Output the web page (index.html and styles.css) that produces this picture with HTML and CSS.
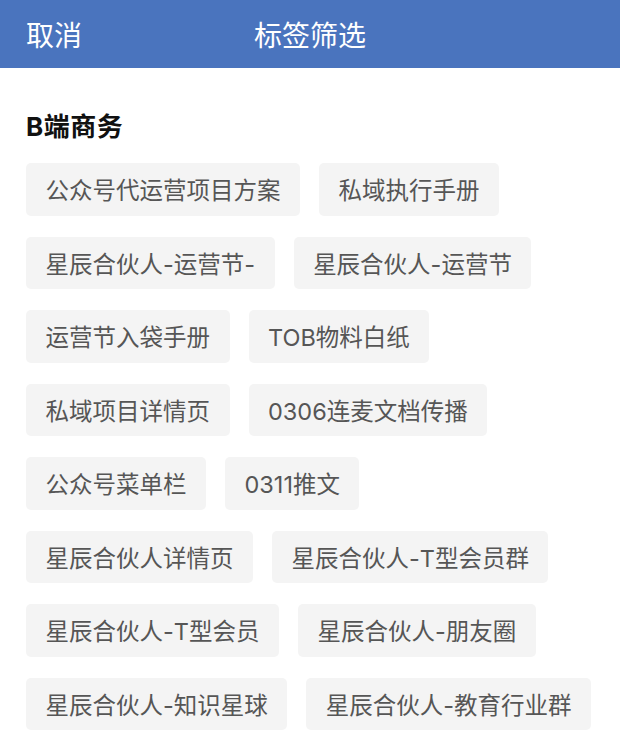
FILE: index.html
```html
<!DOCTYPE html>
<html lang="zh-CN">
<head>
<meta charset="utf-8">
<title>标签筛选</title>
<link rel="stylesheet" href="styles.css">
</head>
<body>
<header class="topbar">
  <span class="cancel">取消</span>
  <span class="title">标签筛选</span>
</header>
<main class="content">
  <h2 class="group-title">B端商务</h2>
  <div class="tags">
    <span class="tag">公众号代运营项目方案</span>
    <span class="tag">私域执行手册</span>
    <span class="tag">星辰合伙人-运营节-</span>
    <span class="tag">星辰合伙人-运营节</span>
    <span class="tag">运营节入袋手册</span>
    <span class="tag">TOB物料白纸</span>
    <span class="tag">私域项目详情页</span>
    <span class="tag">0306连麦文档传播</span>
    <span class="tag">公众号菜单栏</span>
    <span class="tag">0311推文</span>
    <span class="tag">星辰合伙人详情页</span>
    <span class="tag">星辰合伙人-T型会员群</span>
    <span class="tag">星辰合伙人-T型会员</span>
    <span class="tag">星辰合伙人-朋友圈</span>
    <span class="tag">星辰合伙人-知识星球</span>
    <span class="tag">星辰合伙人-教育行业群</span>
  </div>
</main>
</body>
</html>
```

FILE: styles.css
```css
html, body {
  margin: 0;
  padding: 0;
  background: #ffffff;
}
body {
  font-family: "Noto Sans CJK SC", "Noto Sans", sans-serif;
  overflow: hidden;
}
.topbar {
  height: 68px;
  background: #4a74be;
  color: #ffffff;
  display: flex;
  align-items: center;
  padding: 0 26px;
  font-size: 28px;
  box-sizing: border-box;
}
.cancel {
  width: 56px;
}
.title {
  margin-left: 172px;
}
.content {
  padding: 0 26px;
}
.group-title {
  margin: 44px 0 21px;
  font-family: "Inter", "Noto Sans CJK SC", sans-serif;
  font-size: 26px;
  line-height: 30px;
  font-weight: 700;
  letter-spacing: 0.5px;
  color: #111111;
}
.tags {
  display: flex;
  flex-wrap: wrap;
  column-gap: 19px;
  row-gap: 21px;
}
.tag {
  display: inline-flex;
  align-items: center;
  height: 52.5px;
  padding: 0 19.5px;
  background: #f4f4f4;
  border-radius: 5px;
  color: #565656;
  font-family: "Inter", "Noto Sans CJK SC", sans-serif;
  font-size: 23.5px;
  white-space: nowrap;
}
```
